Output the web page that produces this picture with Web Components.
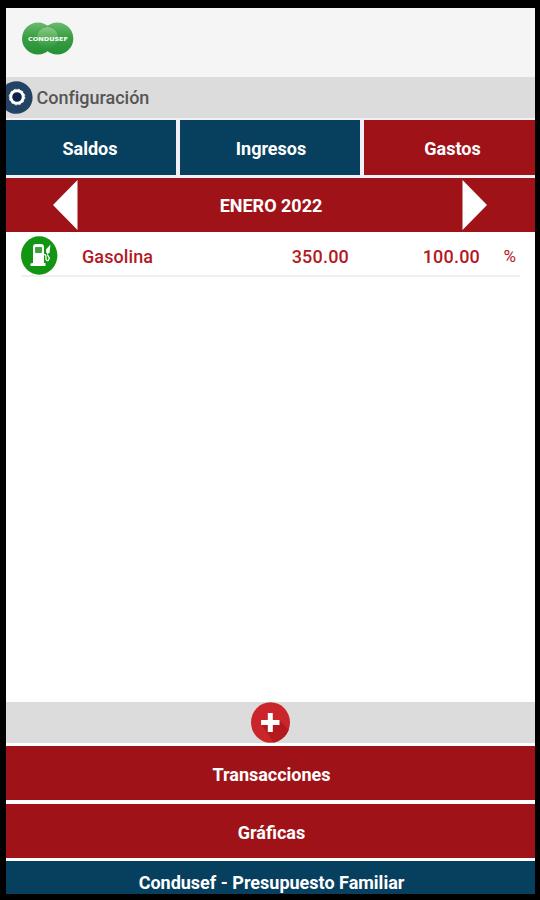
<!DOCTYPE html>
<html lang="es">
<head>
<meta charset="utf-8">
<title>Presupuesto Familiar</title>
<style>
  html, body {
    margin: 0;
    height: 100%;
    background: #000;
    overflow: hidden;
  }
  body {
    font-family: Roboto, "Liberation Sans", sans-serif;
    font-size: 18px;
  }
</style>
</head>
<body>
<budget-app></budget-app>

<script>
class BrandLogo extends HTMLElement {
  constructor() {
    super();
    this.attachShadow({ mode: 'open' });

    this.shadowRoot.innerHTML = `
      <style>
        :host { display: block; width: 53px; height: 34px; }
        svg { display: block; }
        text { font: bold 5.5px "DejaVu Sans", sans-serif; fill: #fff; }
      </style>
      <svg width="53" height="34" viewBox="0 0 53 34">
        <defs>
          <linearGradient id="ball" x1="0" y1="0" x2="0" y2="1">
            <stop offset="0" stop-color="#6dba6e"/>
            <stop offset="0.45" stop-color="#3a9f43"/>
            <stop offset="1" stop-color="#259036"/>
          </linearGradient>
          <linearGradient id="shine" x1="0" y1="0" x2="0" y2="1">
            <stop offset="0" stop-color="#8ccb8b"/>
            <stop offset="0.6" stop-color="#4eac53"/>
            <stop offset="1" stop-color="#2d963b"/>
          </linearGradient>
        </defs>
        <circle cx="17" cy="16.500" r="16" fill="url(#ball)"/>
        <circle cx="36.300" cy="16.500" r="16" fill="url(#ball)"/>
        <circle cx="26.500" cy="15.500" r="11" fill="url(#shine)" stroke="#2f9340" stroke-width="0.6"/>
        <text x="7" y="19" textLength="40" lengthAdjust="spacingAndGlyphs">CONDUSEF</text>
      </svg>
    `;
  }
}

class SettingsBar extends HTMLElement {
  constructor() {
    super();
    this.attachShadow({ mode: 'open' });

    this.shadowRoot.innerHTML = `
      <style>
        :host {
          display: flex;
          align-items: center;
          height: 41px;
          background: #dcdcdc;
          color: #555;
          font-weight: 500;
          overflow: hidden;
        }
        svg { flex: none; margin-right: 4px; }
        span { margin-left: -0.5px; letter-spacing: -0.02px; }
      </style>
      <svg width="27" height="36" viewBox="0 0 27 36">
        <circle cx="10.300" cy="17.500" r="16.300" fill="#234364"/>
        <circle cx="11" cy="17" r="6.300" fill="#0c2349" stroke="#fff" stroke-width="3"/>
        <circle cx="11" cy="17" r="7.900" fill="none" stroke="#fff" stroke-width="0.8" stroke-dasharray="2 2.200"/>
      </svg>
      <span><slot></slot></span>
    `;
  }
}

class NavButton extends HTMLElement {
  constructor() {
    super();
    this.attachShadow({ mode: 'open' });

    this.shadowRoot.innerHTML = `
      <style>
        :host {
          display: flex;
          align-items: center;
          justify-content: center;
          box-sizing: border-box;
          height: 55px;
          padding: 2px 0 0 2px;
          background: #07405f;
          color: #fff;
          font-weight: 700;
          white-space: nowrap;
        }
        :host([tone="red"]) { background: #9f1318; }
      </style>
      <span><slot></slot></span>
    `;
  }
}

class MonthPicker extends HTMLElement {
  constructor() {
    super();
    this.attachShadow({ mode: 'open' });

    this.shadowRoot.innerHTML = `
      <style>
        :host {
          display: flex;
          align-items: center;
          justify-content: space-between;
          box-sizing: border-box;
          height: 54px;
          padding: 0 48px 0 47px;
          background: #9f1318;
          color: #fff;
          font-weight: 700;
        }
        svg { display: block; }
        span { padding-left: 2px; }
      </style>
      <svg width="25" height="50"><path d="M24.500 0V50L0 25Z" fill="#fff"/></svg>
      <span><slot></slot></span>
      <svg width="25" height="50"><path d="M0.500 0V50L25 25Z" fill="#fff"/></svg>
    `;
  }
}

class ExpenseRow extends HTMLElement {
  constructor() {
    super();
    this.attachShadow({ mode: 'open' });

    this.shadowRoot.innerHTML = `
      <style>
        :host {
          display: grid;
          grid-template-columns: 61px 1fr 130px 131px 40px;
          align-items: center;
          box-sizing: border-box;
          height: 45px;
          margin: 0 15px;
          border-bottom: 2px solid #f0f0f0;
          color: #b3191f;
          font-weight: 500;
        }
        svg { display: block; margin-top: 3px; }
        span { padding-top: 5px; }
        .name { letter-spacing: 0.1px; }
        .amount, .share { text-align: right; letter-spacing: 0.2px; }
        .unit { text-align: right; font-size: 17px; font-weight: 400; padding-right: 4px; }
      </style>
      <svg width="37" height="39" viewBox="0 0 37 39">
        <ellipse cx="18.200" cy="19.500" rx="18.200" ry="19.200" fill="#129512"/>
        <path d="M12 11q0-3 3-3h5q3 0 3 3v16h1.500v3h-15v-2.500l2.500-.5z" fill="#fff"/>
        <rect x="14" y="11" width="7" height="6" rx="1" fill="#3ba438"/>
        <path d="M29.500 8.500l-4.300 4.700q-.7 3 1 4.800l2.300-1 .5-4.500z" fill="#fff"/>
        <path d="M23 18.500q2 0 2 2v3q1.200 2 2.500.5l.8-2-2-3.500" fill="none" stroke="#fff" stroke-width="1.300"/>
      </svg>
      <span class="name"></span>
      <span class="amount"></span>
      <span class="share"></span>
      <span class="unit">%</span>
    `;
  }

  connectedCallback() {
    this.shadowRoot.querySelector('.name').textContent = this.getAttribute('name');
    this.shadowRoot.querySelector('.amount').textContent = this.getAttribute('amount');
    this.shadowRoot.querySelector('.share').textContent = this.getAttribute('share');
  }
}

class AddBar extends HTMLElement {
  constructor() {
    super();
    this.attachShadow({ mode: 'open' });

    this.shadowRoot.innerHTML = `
      <style>
        :host {
          display: flex;
          justify-content: center;
          height: 41px;
          background: #dcdcdc;
        }
        svg { display: block; }
      </style>
      <svg width="40" height="41" viewBox="0 0 40 41">
        <defs>
          <clipPath id="disc"><ellipse cx="19.500" cy="20.500" rx="19.500" ry="20.300"/></clipPath>
        </defs>
        <ellipse cx="19.500" cy="20.500" rx="19.500" ry="20.300" fill="#c9252b"/>
        <path d="M28 18L48 38 30 52 11 23 17 23V30H22V23H28Z" fill="#b21a1f" clip-path="url(#disc)"/>
        <path d="M16.800 11h5v7h6.700v5h-6.700v7h-5v-7h-6.700v-5h6.700z" fill="#fff"/>
      </svg>
    `;
  }
}

class BudgetApp extends HTMLElement {
  constructor() {
    super();
    this.attachShadow({ mode: 'open' });

    this.shadowRoot.innerHTML = `
      <style>
        :host {
          display: flex;
          flex-direction: column;
          box-sizing: border-box;
          width: 540px;
          height: 900px;
          padding: 8px 5px 6px 6px;
          background: #000;
        }
        header {
          box-sizing: border-box;
          height: 69px;
          padding: 14px 15px;
          background: #f5f5f5;
        }
        main {
          flex: 1;
          display: flex;
          flex-direction: column;
          background: #fff;
        }
        nav {
          display: grid;
          grid-template-columns: 170px 180px 171px;
          column-gap: 4px;
          padding: 2px 0 3px;
          background: #f0f0f6;
        }
        nav nav-button:first-child { padding-left: 0; padding-right: 2px; }
        nav nav-button:last-child { padding-left: 6px; }
        .list { flex: 1; }
        .actions {
          display: flex;
          flex-direction: column;
          gap: 4px;
          padding: 3px 0;
        }
        .actions nav-button { height: 54px; }
        footer nav-button { height: 33px; padding-top: 9px; }
      </style>
      <header><brand-logo></brand-logo></header>
      <main>
        <settings-bar>Configuración</settings-bar>
        <nav>
          <nav-button>Saldos</nav-button>
          <nav-button>Ingresos</nav-button>
          <nav-button tone="red">Gastos</nav-button>
        </nav>
        <month-picker>ENERO 2022</month-picker>
        <div class="list">
          <expense-row name="Gasolina" amount="350.00" share="100.00"></expense-row>
        </div>
        <add-bar></add-bar>
        <div class="actions">
          <nav-button tone="red">Transacciones</nav-button>
          <nav-button tone="red">Gráficas</nav-button>
        </div>
        <footer><nav-button>Condusef - Presupuesto Familiar</nav-button></footer>
      </main>
    `;
  }
}

customElements.define('brand-logo', BrandLogo);
customElements.define('settings-bar', SettingsBar);
customElements.define('nav-button', NavButton);
customElements.define('month-picker', MonthPicker);
customElements.define('expense-row', ExpenseRow);
customElements.define('add-bar', AddBar);
customElements.define('budget-app', BudgetApp);
</script>
</body>
</html>
